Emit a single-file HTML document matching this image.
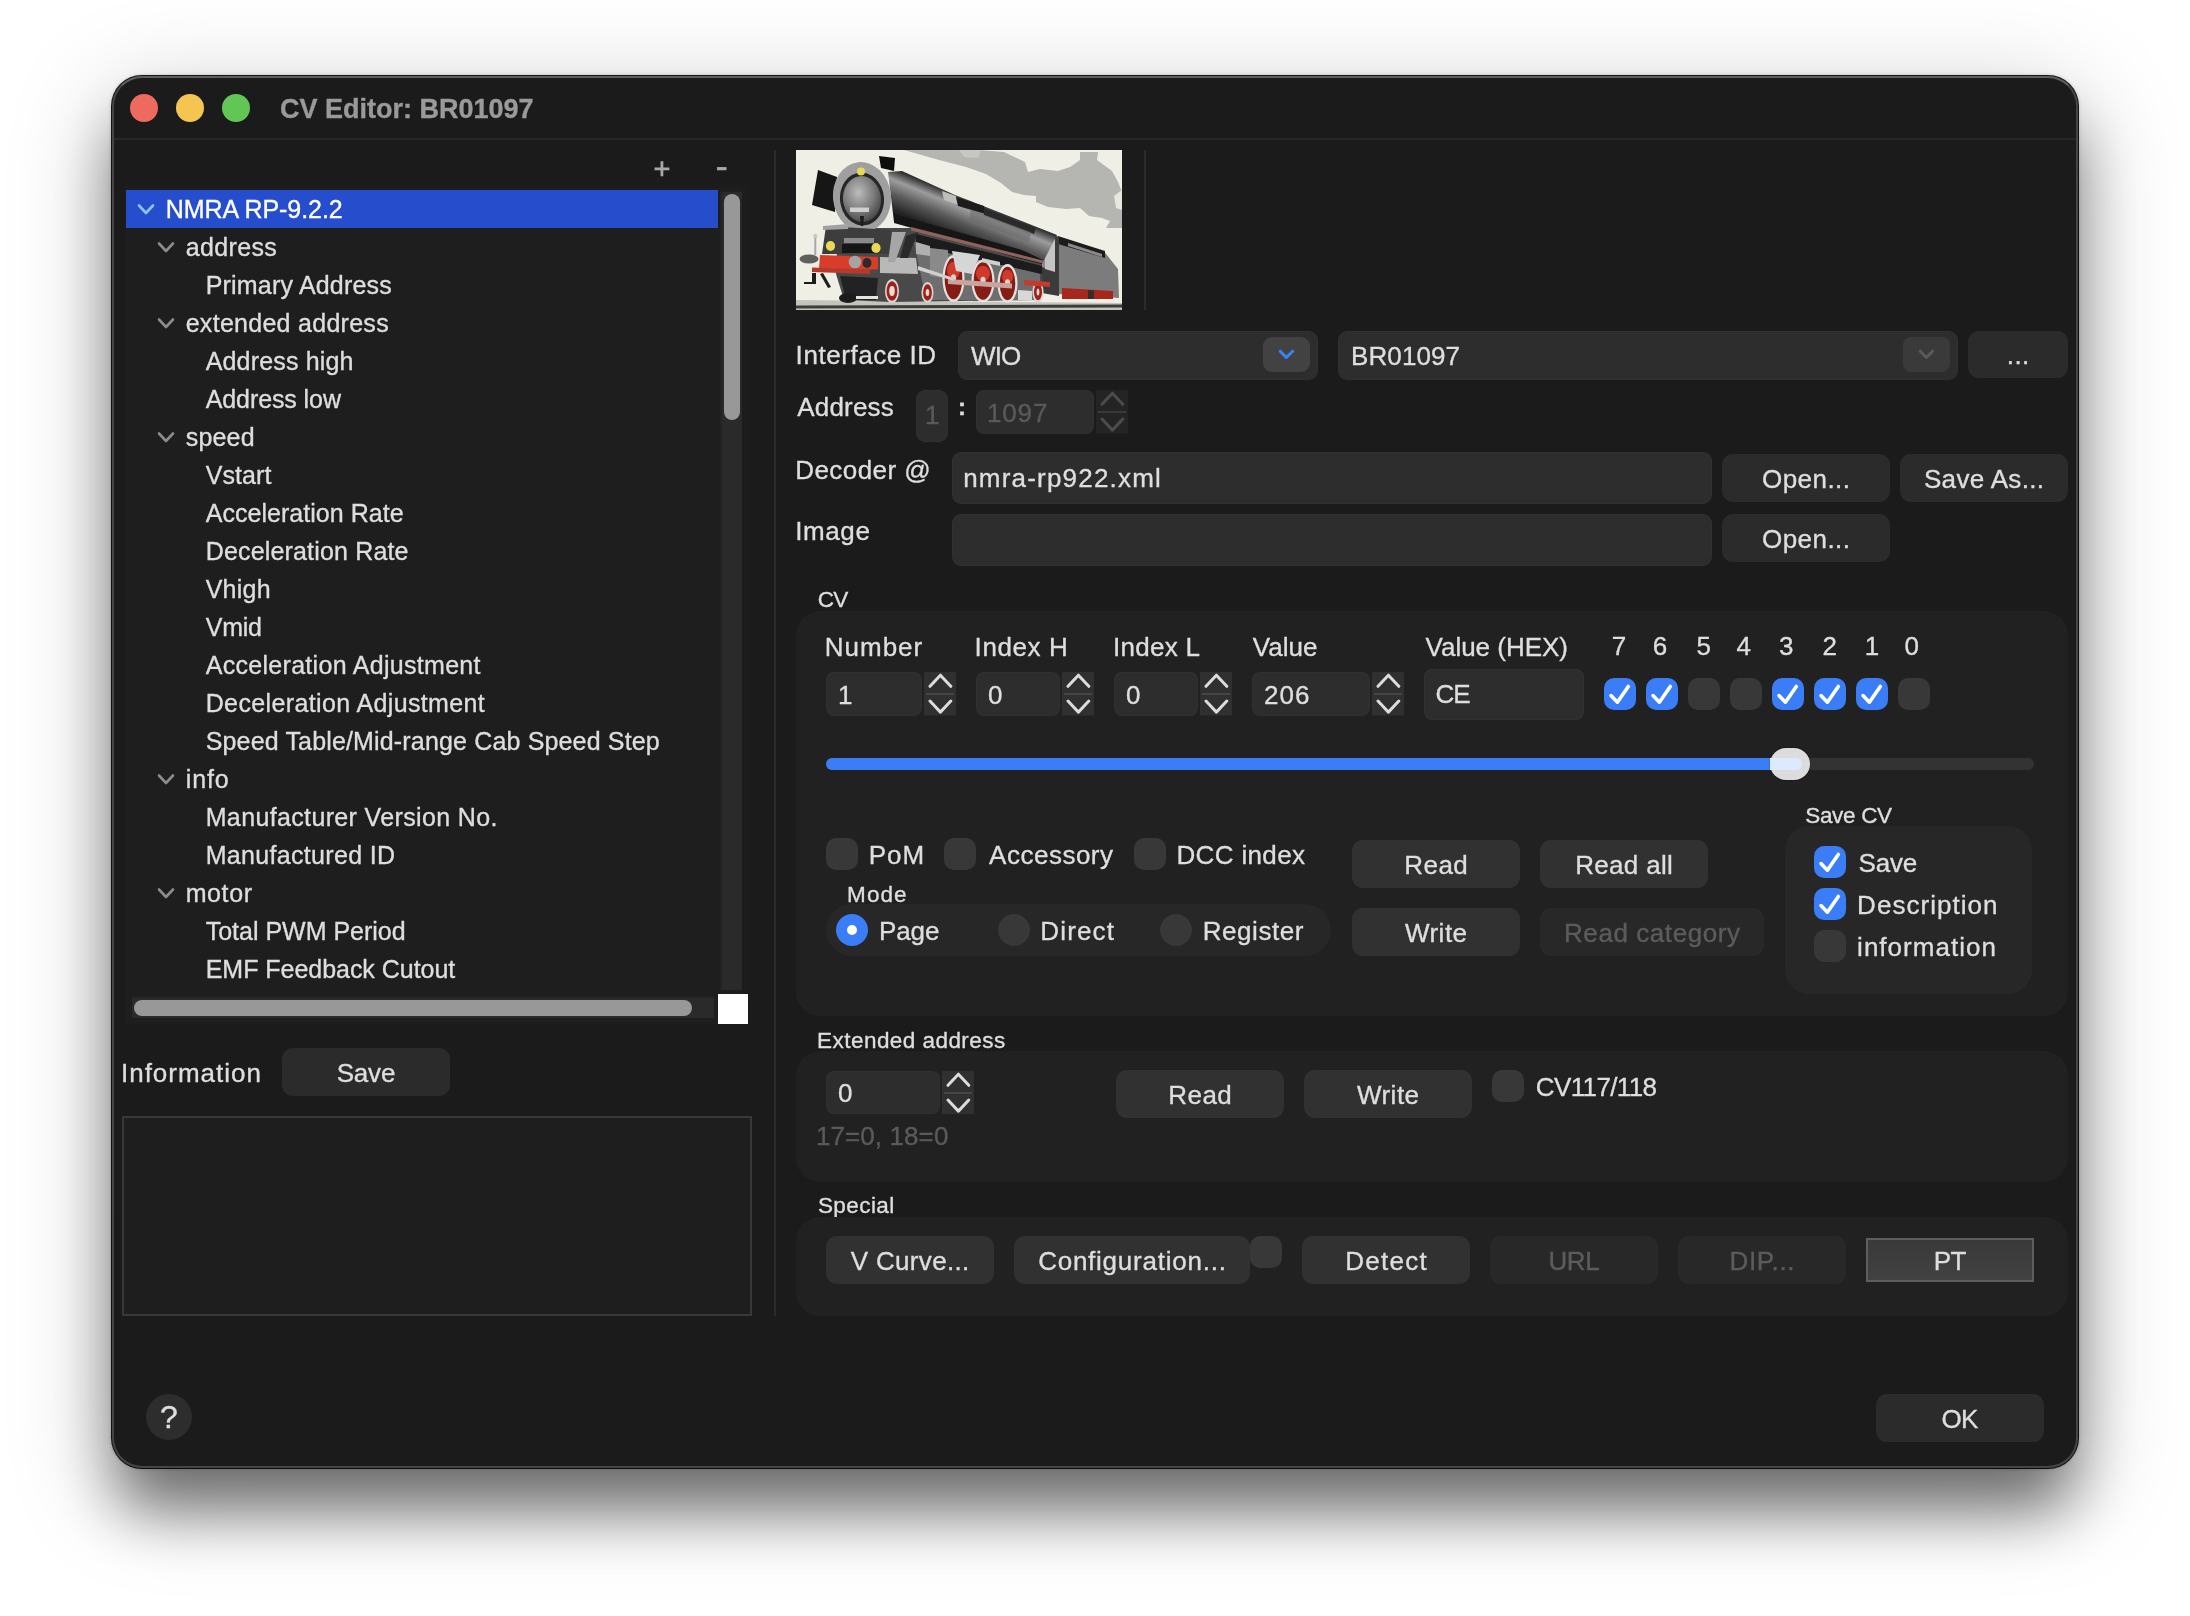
<!DOCTYPE html>
<html lang="en"><head><meta charset="utf-8"><title>CV Editor: BR01097</title>
<style>
html,body{margin:0;padding:0;background:#fff;}
body{width:2190px;height:1616px;position:relative;overflow:hidden;font-family:"Liberation Sans",sans-serif;color:#dedede;font-size:26px;}
.a{position:absolute;box-sizing:border-box;}
.t{position:absolute;white-space:nowrap;line-height:1;}
.t,.btn span{-webkit-text-stroke:0.35px currentColor;}
.win{left:112px;top:76px;width:1966px;height:1392px;border-radius:30px;background:#1b1b1b;
 box-shadow:0 0 0 1px rgba(0,0,0,.9), 0 0 4px rgba(0,0,0,.3), 0 47px 62px -6px rgba(0,0,0,.50), 0 24px 100px 6px rgba(0,0,0,.21);}
.win:after{content:"";position:absolute;left:0;top:0;right:0;bottom:0;border-radius:30px;border:2px solid rgba(255,255,255,.19);border-top-color:rgba(255,255,255,.30);pointer-events:none;}
.btn{position:absolute;box-sizing:border-box;background:rgba(255,255,255,.075);border-radius:11px;text-align:center;white-space:nowrap;}
.btn span{position:absolute;left:0;right:0;display:block;line-height:1;text-align:center;}
.dis{color:#5c5c5c;background:rgba(255,255,255,.035);}
.fld{position:absolute;box-sizing:border-box;background:#2d2d2d;border-radius:8px;box-shadow:inset 0 0 0 1px rgba(255,255,255,.025);}
.grp{position:absolute;box-sizing:border-box;background:#212121;border-radius:24px;}
.cb{position:absolute;box-sizing:border-box;width:32px;height:32px;border-radius:10px;background:#383838;}
.cb.on{background:#3b7df6;}
.rd{position:absolute;width:32px;height:32px;border-radius:16px;background:#383838;}
.rd.on{background:#3b7df6;}
.rd.on:after{content:"";position:absolute;left:11px;top:11px;width:10px;height:10px;border-radius:5px;background:#fff;}
.row{position:absolute;left:126px;width:592px;height:38px;}
.tr{font-size:25px;}
.sm{font-size:22.5px;}
.st{position:absolute;width:32px;background:#303030;}
</style></head><body>
<div class="a" style="left:0;top:0;width:2190px;height:1616px;will-change:transform;">

<div class="a win"></div>
<div class="a" style="left:130px;top:94px;width:28px;height:28px;border-radius:14px;background:#ee6a5f;"></div>
<div class="a" style="left:176px;top:94px;width:28px;height:28px;border-radius:14px;background:#f5c451;"></div>
<div class="a" style="left:222px;top:94px;width:28px;height:28px;border-radius:14px;background:#62c656;"></div>
<div class="t" id="title" style="left:280px;top:95.5px;font-size:27px;font-weight:bold;color:#9a9a9a;">CV Editor: BR01097</div>
<div class="a" style="left:114px;top:138px;width:1962px;height:2px;background:#272727;"></div>
<div class="t" id="plus" style="left:653.6px;top:154.5px;font-size:29px;-webkit-text-stroke:0.6px #a8a8a8;color:#a8a8a8;">+</div>
<div class="t" id="minus" style="left:715.5px;top:146.7px;font-size:37px;color:#a8a8a8;">-</div>
<div class="a" style="left:124px;top:184px;width:626px;height:842px;background:#1c1c1c;"></div>
<div class="a" style="left:126px;top:188px;width:616px;height:836px;background:#1e1e1e;"></div>
<div class="row" style="top:190px;background:#254dcc;">
<svg class="a" style="left:10px;top:9px" width="20" height="20"><path d="M3 6.5l7 7.5 7-7.5" stroke="#8fc3ff" stroke-width="2.6" fill="none" stroke-linecap="round" stroke-linejoin="round"/></svg>
<div class="t tr" style="left:39.69999999999999px;top:7.1px;letter-spacing:-0.07px;color:#fff;">NMRA RP-9.2.2</div></div>
<div class="row" style="top:228px;">
<svg class="a" style="left:30px;top:9px" width="20" height="20"><path d="M3 6.5l7 7.5 7-7.5" stroke="#8c8c8c" stroke-width="2.6" fill="none" stroke-linecap="round" stroke-linejoin="round"/></svg>
<div class="t tr" style="left:59.69999999999999px;top:7.1px;letter-spacing:0.36px;">address</div></div>
<div class="row" style="top:266px;">
<div class="t tr" style="left:79.69999999999999px;top:7.1px;letter-spacing:0.19px;">Primary Address</div></div>
<div class="row" style="top:304px;">
<svg class="a" style="left:30px;top:9px" width="20" height="20"><path d="M3 6.5l7 7.5 7-7.5" stroke="#8c8c8c" stroke-width="2.6" fill="none" stroke-linecap="round" stroke-linejoin="round"/></svg>
<div class="t tr" style="left:59.69999999999999px;top:7.1px;letter-spacing:0.28px;">extended address</div></div>
<div class="row" style="top:342px;">
<div class="t tr" style="left:79.69999999999999px;top:7.1px;letter-spacing:0.17px;">Address high</div></div>
<div class="row" style="top:380px;">
<div class="t tr" style="left:79.69999999999999px;top:7.1px;letter-spacing:-0.09px;">Address low</div></div>
<div class="row" style="top:418px;">
<svg class="a" style="left:30px;top:9px" width="20" height="20"><path d="M3 6.5l7 7.5 7-7.5" stroke="#8c8c8c" stroke-width="2.6" fill="none" stroke-linecap="round" stroke-linejoin="round"/></svg>
<div class="t tr" style="left:59.69999999999999px;top:7.1px;letter-spacing:0.20px;">speed</div></div>
<div class="row" style="top:456px;">
<div class="t tr" style="left:79.69999999999999px;top:7.1px;letter-spacing:0.09px;">Vstart</div></div>
<div class="row" style="top:494px;">
<div class="t tr" style="left:79.69999999999999px;top:7.1px;letter-spacing:0.04px;">Acceleration Rate</div></div>
<div class="row" style="top:532px;">
<div class="t tr" style="left:79.69999999999999px;top:7.1px;letter-spacing:0.17px;">Deceleration Rate</div></div>
<div class="row" style="top:570px;">
<div class="t tr" style="left:79.69999999999999px;top:7.1px;letter-spacing:0.24px;">Vhigh</div></div>
<div class="row" style="top:608px;">
<div class="t tr" style="left:79.69999999999999px;top:7.1px;letter-spacing:-0.21px;">Vmid</div></div>
<div class="row" style="top:646px;">
<div class="t tr" style="left:79.69999999999999px;top:7.1px;letter-spacing:0.30px;">Acceleration Adjustment</div></div>
<div class="row" style="top:684px;">
<div class="t tr" style="left:79.69999999999999px;top:7.1px;letter-spacing:0.37px;">Deceleration Adjustment</div></div>
<div class="row" style="top:722px;">
<div class="t tr" style="left:79.69999999999999px;top:7.1px;letter-spacing:0.16px;">Speed Table/Mid-range Cab Speed Step</div></div>
<div class="row" style="top:760px;">
<svg class="a" style="left:30px;top:9px" width="20" height="20"><path d="M3 6.5l7 7.5 7-7.5" stroke="#8c8c8c" stroke-width="2.6" fill="none" stroke-linecap="round" stroke-linejoin="round"/></svg>
<div class="t tr" style="left:59.69999999999999px;top:7.1px;letter-spacing:0.92px;">info</div></div>
<div class="row" style="top:798px;">
<div class="t tr" style="left:79.69999999999999px;top:7.1px;letter-spacing:0.36px;">Manufacturer Version No.</div></div>
<div class="row" style="top:836px;">
<div class="t tr" style="left:79.69999999999999px;top:7.1px;letter-spacing:0.32px;">Manufactured ID</div></div>
<div class="row" style="top:874px;">
<svg class="a" style="left:30px;top:9px" width="20" height="20"><path d="M3 6.5l7 7.5 7-7.5" stroke="#8c8c8c" stroke-width="2.6" fill="none" stroke-linecap="round" stroke-linejoin="round"/></svg>
<div class="t tr" style="left:59.69999999999999px;top:7.1px;letter-spacing:0.60px;">motor</div></div>
<div class="row" style="top:912px;">
<div class="t tr" style="left:79.69999999999999px;top:7.1px;letter-spacing:-0.01px;">Total PWM Period</div></div>
<div class="row" style="top:950px;">
<div class="t tr" style="left:79.69999999999999px;top:7.1px;letter-spacing:-0.03px;">EMF Feedback Cutout</div></div>
<div class="a" style="left:720px;top:192px;width:22px;height:798px;background:#2a2a2a;border-left:2px solid #232323;"></div>
<div class="a" style="left:724px;top:194px;width:16px;height:226px;border-radius:8px;background:#989898;"></div>
<div class="a" style="left:132px;top:996px;width:582px;height:22px;background:#2a2a2a;border-top:2px solid #232323;"></div>
<div class="a" style="left:134px;top:1000px;width:558px;height:16px;border-radius:8px;background:#989898;"></div>
<div class="a" style="left:718px;top:994px;width:30px;height:30px;background:#fff;"></div>
<div class="t " style="left:121.0px;top:1060.3px;font-size:26px;letter-spacing:0.98px;">Information</div>
<div class="btn " style="left:282px;top:1048px;width:168px;height:47.5px;"><span style="top:11.6px;letter-spacing:-0.17px;text-indent:-0.17px;">Save</span></div>
<div class="a" style="left:122px;top:1116px;width:630px;height:200px;background:#1e1e1e;border:2px solid #383838;"></div>
<div class="a" style="left:146px;top:1394px;width:46px;height:46px;border-radius:23px;background:#2d2d2d;text-align:center;"><span class="t" style="left:0;right:0;text-align:center;top:7.4px;font-size:32px;">?</span></div>
<div class="btn " style="left:1876px;top:1394px;width:168px;height:47.5px;"><span style="top:11.6px;letter-spacing:-0.70px;text-indent:-0.70px;">OK</span></div>
<div class="a" style="left:774px;top:150px;width:2px;height:1166px;background:#2b2b2b;"></div>
<div class="a" style="left:1144px;top:150px;width:2px;height:160px;background:#2b2b2b;"></div>
<svg class="a" style="left:796px;top:150px" width="326" height="160" viewBox="0 0 326 160"><defs><filter id="bl" x="-5%" y="-5%" width="110%" height="110%"><feGaussianBlur stdDeviation="0.75"/></filter><linearGradient id="boil" gradientUnits="userSpaceOnUse" x1="150" y1="40" x2="132" y2="84"><stop offset="0" stop-color="#2c2c2c"/><stop offset="0.22" stop-color="#9c9c9c"/><stop offset="0.5" stop-color="#5a5a5a"/><stop offset="0.8" stop-color="#262626"/><stop offset="1" stop-color="#151515"/></linearGradient><radialGradient id="door" cx="0.42" cy="0.35" r="0.75"><stop offset="0" stop-color="#bcbcbc"/><stop offset="0.55" stop-color="#7a7a7a"/><stop offset="1" stop-color="#3a3a3a"/></radialGradient><clipPath id="cl"><rect width="326" height="160"/></clipPath></defs><rect width="326" height="160" fill="#f0efe6"/><g clip-path="url(#cl)" filter="url(#bl)"><polygon points="108,0 183,0 208,2 229,12 232,22 244,19 262,21 274,17 284,10 284,2 302,2 301,10 316,21 322,32 326,42 326,78 310,78 314,71 306,68 293,66 284,58 270,59 252,57 240,52 240,46 228,45 216,42 205,33 190,24 170,17 143,10" fill="#b5b5b2" /><polygon points="163,0 185,0 182,8 168,7" fill="#c6c6c2" /><polygon points="318,46 326,40 326,60 320,58" fill="#e8e7df" /><polygon points="0,150 326,153 326,160 0,160" fill="#c4c4be" /><polygon points="0,155.5 326,154.5 326,157.5 0,158.5" fill="#3c3c3c" /><polygon points="262,87 308.5,102 322,119 323,148 261,144" fill="#7c7c7c" /><polygon points="262,86 309,101 309,108 262,94" fill="#1f1f1f" /><polygon points="272,93 306,104 306,107 272,96" fill="#8a8a8a" /><polygon points="266,138 317,141 317,149 266,149" fill="#a9271d" /><polygon points="292,140 298,140.4 298,149 292,149" fill="#3a2a2a" /><polygon points="240,78 263,87 263,146 240,142" fill="#3a3a3a" /><polygon points="249,84 259,88 259,122 249,119" fill="#c4c4c4" /><polygon points="243,100 249,102 249,118 243,116" fill="#8e8e8e" /><polygon points="42,78 118,78 246,110 246,150 95,152 48,150 40,124" fill="#4a4a4a" /><polygon points="118,92 200,112 244,124 244,150 130,150" fill="#6e6e6e" /><polygon points="120,84 246,116 246,124 120,96" fill="#1a1a1a" /><polygon points="92,22 106,21 159,45 223,70 261,85 247,112 223,107 142,85 98,72" fill="url(#boil)" /><polygon points="98,64 226,100 247,110 246,114 222,108 98,73" fill="#161616" /><polygon points="146,41 160,46 162,55 148,50" fill="#bdbdbd" /><polygon points="160,47 188,56 190,64 162,56" fill="#1e1e1e" /><polygon points="188,58 240,78 238,84 188,65" fill="#2a2a2a" /><polygon points="175,60 235,82 233,92 173,70" fill="#6a6a6a" opacity="0.55"/><polygon points="115,77 247,110.5 247,113.5 115,80.5" fill="#8f625d" /><polygon points="83,6 99,8 98,21 85,18" fill="#101010" /><polygon points="22,20 41,27 39,62 16,55" fill="#141414" /><ellipse cx="66" cy="47" rx="29" ry="35" fill="#9f9f9f" transform="rotate(-6 66 47)"/><ellipse cx="66" cy="49" rx="22" ry="26.5" fill="#262626" transform="rotate(-6 66 49)"/><ellipse cx="66" cy="49" rx="19" ry="23" fill="url(#door)" transform="rotate(-6 66 49)"/><polygon points="54,57.5 73,57.5 73,62 54,62" fill="#cfcfcf" /><polygon points="64,66 68,66 67,76 65,76" fill="#1a1a1a" /><polygon points="30,76 95,80 98,104 26,104" fill="#3c3c3c" /><polygon points="27,76 52,74 52,79 27,80" fill="#a2a2a2" /><polygon points="46,94 80,94 80,103 46,103" fill="#151515" /><polygon points="48,88 78,88 78,93 48,93" fill="#8a8a8a" /><ellipse cx="65" cy="21.5" rx="4" ry="4" fill="#e9da55" /><ellipse cx="34.5" cy="96" rx="4.6" ry="5" fill="#e9da55" /><ellipse cx="80" cy="98" rx="4.6" ry="5" fill="#e9da55" /><polygon points="24,105 82,107 82,119.5 23,118.5" fill="#d93c2b" /><polygon points="16,117.5 74,119.5 74,124 16,122" fill="#b8382c" /><ellipse cx="59" cy="112" rx="6.3" ry="6.3" fill="#a4a4a4" /><ellipse cx="71" cy="113" rx="4.5" ry="5" fill="#2a2a2a" /><ellipse cx="13" cy="109" rx="9.5" ry="4.6" fill="#5e5e5e" /><polygon points="18.3,86 20.3,86 20.3,105 18.3,105" fill="#a8a8a8" /><ellipse cx="19.3" cy="86" rx="2.2" ry="2.2" fill="#c8c8c8" /><polygon points="16,123 20,123 20,134 8,134 8,132 16,132" fill="#1c1c1c" /><polygon points="24,124 27,123 35,137 32,138" fill="#1c1c1c" /><polygon points="84,107 120,108 122,124 84,123" fill="#b9b9b9" /><polygon points="96,82 110,82 99,112 92,112" fill="#a6a6a6" /><polygon points="110,86 122,82 112,108 104,108" fill="#2a2a2a" /><polygon points="134,98 152,100 152,128 134,126" fill="#8a8a8a" /><polygon points="120,92 134,96 134,106 120,104" fill="#b0b0b0" /><polygon points="44,126 82,128 80,150 50,150" fill="#202020" /><ellipse cx="52" cy="148" rx="9" ry="5" fill="#1a1a1a" /><polygon points="60,146 82,146 82,149 60,149" fill="#e4e4e4" /><ellipse cx="157.5" cy="128.5" rx="11" ry="23.5" fill="#e2e2e2" /><ellipse cx="157.5" cy="128.5" rx="8.8" ry="20.7" fill="#861a12" /><ellipse cx="157.5" cy="120.275" rx="6.5" ry="8.46" fill="#cf3a2c" /><ellipse cx="157.5" cy="128.5" rx="2.6" ry="4.2" fill="#e8d0cc" /><ellipse cx="187" cy="131" rx="11.5" ry="21.5" fill="#e2e2e2" /><ellipse cx="187" cy="131" rx="9.3" ry="18.7" fill="#861a12" /><ellipse cx="187" cy="123.475" rx="7" ry="7.74" fill="#cf3a2c" /><ellipse cx="187" cy="131" rx="2.6" ry="4.2" fill="#e8d0cc" /><ellipse cx="211.5" cy="133.5" rx="10" ry="19.5" fill="#e2e2e2" /><ellipse cx="211.5" cy="133.5" rx="7.8" ry="16.7" fill="#861a12" /><ellipse cx="211.5" cy="126.675" rx="5.5" ry="7.02" fill="#cf3a2c" /><ellipse cx="211.5" cy="133.5" rx="2.6" ry="4.2" fill="#e8d0cc" /><polygon points="152,129 216,133.5 216,138.5 152,134" fill="#caa39d" /><polygon points="156,101 184,105 176,124 160,121" fill="#d6d6d6" /><polygon points="122,116 158,128 158,131 122,120" fill="#d0d0d0" /><polygon points="186,108 204,112 204,116 186,112" fill="#d0d0d0" /><ellipse cx="96" cy="141" rx="7" ry="12" fill="#d6d6d6" /><ellipse cx="96" cy="141" rx="5.4" ry="9.8" fill="#9c2018" /><ellipse cx="96" cy="141" rx="2.8" ry="5" fill="#f0d8d4" /><ellipse cx="131.5" cy="142.5" rx="6" ry="10.5" fill="#d6d6d6" /><ellipse cx="131.5" cy="142.5" rx="4.4" ry="8.3" fill="#9c2018" /><ellipse cx="131.5" cy="142.5" rx="1.8" ry="3.5" fill="#f0d8d4" /><ellipse cx="242" cy="142" rx="5.6" ry="10.5" fill="#d6d6d6" /><ellipse cx="242" cy="142" rx="4" ry="8.3" fill="#9c2018" /><ellipse cx="242" cy="142" rx="1.4" ry="3.5" fill="#f0d8d4" /><polygon points="228,130 254,132 254,137 228,135" fill="#c43a2d" /><polygon points="222,140 236,141 236,150 222,150" fill="#d8d8d8" /></g></svg>
<div class="t " style="left:795.6px;top:342.3px;font-size:26px;letter-spacing:0.56px;">Interface ID</div>
<div class="fld" style="left:958px;top:330.5px;width:360px;height:49px;border-radius:9px;"></div>
<div class="t " style="left:971.0px;top:342.8px;font-size:26px;letter-spacing:-0.90px;">WIO</div>
<div class="a" style="left:1263px;top:337px;width:47px;height:35px;border-radius:9px;background:#424242;"></div>
<svg class="a" style="left:1276px;top:345px" width="22" height="20"><path d="M4.2 6.2l6.2 6.3 6.2-6.3" stroke="#3a82f7" stroke-width="3" fill="none" stroke-linecap="round" stroke-linejoin="round"/></svg>
<div class="fld" style="left:1338px;top:330.5px;width:620px;height:49px;border-radius:9px;"></div>
<div class="t " style="left:1351px;top:342.8px;font-size:26px;letter-spacing:0.10px;">BR01097</div>
<div class="a" style="left:1903px;top:337px;width:47px;height:35px;border-radius:8px;background:#3a3a3a;"></div>
<svg class="a" style="left:1916px;top:345px" width="22" height="20"><path d="M4.2 6.2l6.2 6.3 6.2-6.3" stroke="#5a5a5a" stroke-width="3" fill="none" stroke-linecap="round" stroke-linejoin="round"/></svg>
<div class="btn " style="left:1968px;top:330.5px;width:100px;height:47px;"><span style="top:11.3px;letter-spacing:0.50px;text-indent:0.50px;">...</span></div>
<div class="t " style="left:797.2px;top:394.3px;font-size:26px;letter-spacing:0.20px;">Address</div>
<div class="fld" style="left:916px;top:390px;width:32px;height:52px;border-radius:9px;"></div>
<div class="t " style="left:925px;top:402.3px;font-size:26px;letter-spacing:1.00px;color:#5a5a5a;">1</div>
<div class="t" id="colon" style="left:958px;top:395.2px;font-size:24px;font-weight:bold;">:</div>
<div class="fld" style="left:976px;top:390px;width:118px;height:43.5px;"></div>
<div class="t " style="left:987.0px;top:399.8px;font-size:26px;letter-spacing:0.85px;color:#5a5a5a;">1097</div>
<svg class="a" style="left:1096px;top:390px" width="32" height="43.5" viewBox="0 0 32 43.5"><rect width="32" height="43.5" fill="#242424"/><path d="M6 14.3L16.4 3.2 26.8 14.3M6 29L16.4 40.1 26.8 29" stroke="#4c4c4c" stroke-width="3" fill="none" stroke-linecap="round" stroke-linejoin="round"/><rect x="2" y="21" width="28" height="2" fill="#3a3a3a"/></svg>
<div class="t " style="left:795.2px;top:456.8px;font-size:26px;letter-spacing:0.44px;">Decoder @</div>
<div class="fld" style="left:952px;top:452px;width:760px;height:51.5px;border-radius:9px;"></div>
<div class="t " style="left:963.2px;top:464.8px;font-size:26px;letter-spacing:1.20px;">nmra-rp922.xml</div>
<div class="btn " style="left:1722px;top:454px;width:168px;height:47.8px;"><span style="top:11.7px;letter-spacing:0.46px;text-indent:0.46px;">Open...</span></div>
<div class="btn " style="left:1900px;top:454px;width:168px;height:47.8px;"><span style="top:11.7px;letter-spacing:0.34px;text-indent:0.34px;">Save As...</span></div>
<div class="t " style="left:795.2px;top:518.3px;font-size:26px;letter-spacing:0.60px;">Image</div>
<div class="fld" style="left:952px;top:514px;width:760px;height:51.5px;border-radius:9px;"></div>
<div class="btn " style="left:1722px;top:514px;width:168px;height:47.6px;"><span style="top:11.6px;letter-spacing:0.46px;text-indent:0.46px;">Open...</span></div>
<div class="t " style="left:817.8px;top:589.0px;font-size:22.5px;letter-spacing:-0.90px;">CV</div>
<div class="grp" style="left:796px;top:610.5px;width:1272px;height:405px;"></div>
<div class="t " style="left:824.8px;top:634.3px;font-size:26px;letter-spacing:0.98px;">Number</div>
<div class="t " style="left:974.6px;top:634.3px;font-size:26px;letter-spacing:0.58px;">Index H</div>
<div class="t " style="left:1112.9px;top:634.3px;font-size:26px;letter-spacing:0.29px;">Index L</div>
<div class="t " style="left:1252.8px;top:634.3px;font-size:26px;letter-spacing:0.05px;">Value</div>
<div class="t " style="left:1425.6px;top:634.3px;font-size:26px;letter-spacing:-0.02px;">Value (HEX)</div>
<div class="fld" style="left:826px;top:672px;width:96px;height:43.5px;"></div>
<div class="t " style="left:838px;top:681.8px;font-size:26px;letter-spacing:1.00px;">1</div>
<svg class="a" style="left:924px;top:672px" width="32" height="43.5" viewBox="0 0 32 43.5"><rect width="32" height="43.5" fill="#303030"/><path d="M6 14.3L16.4 3.2 26.8 14.3M6 29L16.4 40.1 26.8 29" stroke="#dcdcdc" stroke-width="3" fill="none" stroke-linecap="round" stroke-linejoin="round"/><rect x="2" y="21" width="28" height="2" fill="#464646"/></svg>
<div class="fld" style="left:976px;top:672px;width:84px;height:43.5px;"></div>
<div class="t " style="left:988px;top:681.8px;font-size:26px;letter-spacing:1.00px;">0</div>
<svg class="a" style="left:1062px;top:672px" width="32" height="43.5" viewBox="0 0 32 43.5"><rect width="32" height="43.5" fill="#303030"/><path d="M6 14.3L16.4 3.2 26.8 14.3M6 29L16.4 40.1 26.8 29" stroke="#dcdcdc" stroke-width="3" fill="none" stroke-linecap="round" stroke-linejoin="round"/><rect x="2" y="21" width="28" height="2" fill="#464646"/></svg>
<div class="fld" style="left:1114px;top:672px;width:84px;height:43.5px;"></div>
<div class="t " style="left:1126px;top:681.8px;font-size:26px;letter-spacing:1.00px;">0</div>
<svg class="a" style="left:1200px;top:672px" width="32" height="43.5" viewBox="0 0 32 43.5"><rect width="32" height="43.5" fill="#303030"/><path d="M6 14.3L16.4 3.2 26.8 14.3M6 29L16.4 40.1 26.8 29" stroke="#dcdcdc" stroke-width="3" fill="none" stroke-linecap="round" stroke-linejoin="round"/><rect x="2" y="21" width="28" height="2" fill="#464646"/></svg>
<div class="fld" style="left:1252px;top:672px;width:118px;height:43.5px;"></div>
<div class="t " style="left:1264px;top:681.8px;font-size:26px;letter-spacing:1.00px;">206</div>
<svg class="a" style="left:1372px;top:672px" width="32" height="43.5" viewBox="0 0 32 43.5"><rect width="32" height="43.5" fill="#303030"/><path d="M6 14.3L16.4 3.2 26.8 14.3M6 29L16.4 40.1 26.8 29" stroke="#dcdcdc" stroke-width="3" fill="none" stroke-linecap="round" stroke-linejoin="round"/><rect x="2" y="21" width="28" height="2" fill="#464646"/></svg>
<div class="fld" style="left:1424px;top:668.5px;width:160px;height:51.5px;"></div>
<div class="t " style="left:1435.4px;top:680.8px;font-size:26px;letter-spacing:-0.90px;">CE</div>
<div class="cb on" style="left:1604.0px;top:678px;"><svg width="32" height="32" style="position:absolute;left:0;top:0"><path d="M7 17.6l6.4 6.6L24.3 8.4" stroke="#fff" stroke-width="3.6" fill="none" stroke-linecap="round" stroke-linejoin="round"/></svg></div>
<div class="t" style="left:1598.9px;width:40px;text-align:center;top:633.0px;">7</div>
<div class="cb on" style="left:1646.0px;top:678px;"><svg width="32" height="32" style="position:absolute;left:0;top:0"><path d="M7 17.6l6.4 6.6L24.3 8.4" stroke="#fff" stroke-width="3.6" fill="none" stroke-linecap="round" stroke-linejoin="round"/></svg></div>
<div class="t" style="left:1640.0px;width:40px;text-align:center;top:633.0px;">6</div>
<div class="cb" style="left:1688.0px;top:678px;"></div>
<div class="t" style="left:1683.8px;width:40px;text-align:center;top:633.0px;">5</div>
<div class="cb" style="left:1730.0px;top:678px;"></div>
<div class="t" style="left:1723.7px;width:40px;text-align:center;top:633.0px;">4</div>
<div class="cb on" style="left:1772.0px;top:678px;"><svg width="32" height="32" style="position:absolute;left:0;top:0"><path d="M7 17.6l6.4 6.6L24.3 8.4" stroke="#fff" stroke-width="3.6" fill="none" stroke-linecap="round" stroke-linejoin="round"/></svg></div>
<div class="t" style="left:1766.2px;width:40px;text-align:center;top:633.0px;">3</div>
<div class="cb on" style="left:1814.0px;top:678px;"><svg width="32" height="32" style="position:absolute;left:0;top:0"><path d="M7 17.6l6.4 6.6L24.3 8.4" stroke="#fff" stroke-width="3.6" fill="none" stroke-linecap="round" stroke-linejoin="round"/></svg></div>
<div class="t" style="left:1809.7px;width:40px;text-align:center;top:633.0px;">2</div>
<div class="cb on" style="left:1856.0px;top:678px;"><svg width="32" height="32" style="position:absolute;left:0;top:0"><path d="M7 17.6l6.4 6.6L24.3 8.4" stroke="#fff" stroke-width="3.6" fill="none" stroke-linecap="round" stroke-linejoin="round"/></svg></div>
<div class="t" style="left:1852.0px;width:40px;text-align:center;top:633.0px;">1</div>
<div class="cb" style="left:1898.0px;top:678px;"></div>
<div class="t" style="left:1891.7px;width:40px;text-align:center;top:633.0px;">0</div>
<div class="a" style="left:826px;top:758px;width:1208px;height:12px;border-radius:6px;background:#333;"></div>
<div class="a" style="left:826px;top:758px;width:970px;height:12px;border-radius:6px;background:#3b7df6;"></div>
<div class="a" style="left:1770px;top:748px;width:40px;height:32px;border-radius:16px;background:#dcdcdc;box-shadow:0 0 2px rgba(0,0,0,.4);"></div>
<div class="a" style="left:1770px;top:758px;width:32px;height:12px;border-radius:0 6px 6px 0;background:#dde9ff;"></div>
<div class="cb" style="left:826px;top:838px;"></div>
<div class="t " style="left:868.8px;top:842.3px;font-size:26px;letter-spacing:0.90px;">PoM</div>
<div class="cb" style="left:944px;top:838px;"></div>
<div class="t " style="left:989.1px;top:842.3px;font-size:26px;letter-spacing:0.50px;">Accessory</div>
<div class="cb" style="left:1134px;top:838px;"></div>
<div class="t " style="left:1176.5px;top:842.3px;font-size:26px;letter-spacing:0.34px;">DCC index</div>
<div class="btn " style="left:1352px;top:840px;width:168px;height:47.8px;"><span style="top:11.7px;letter-spacing:0.50px;text-indent:0.50px;">Read</span></div>
<div class="btn " style="left:1540px;top:840px;width:168px;height:47.8px;"><span style="top:11.7px;letter-spacing:0.30px;text-indent:0.30px;">Read all</span></div>
<div class="t " style="left:847.1px;top:883.5px;font-size:22.5px;letter-spacing:1.04px;">Mode</div>
<div class="a" style="left:826px;top:904px;width:505px;height:52px;border-radius:26px;background:#272727;"></div>
<div class="rd on" style="left:836px;top:914px;"></div>
<div class="t " style="left:878.9px;top:917.8px;font-size:26px;letter-spacing:-0.04px;">Page</div>
<div class="rd" style="left:998px;top:914px;"></div>
<div class="t " style="left:1040.3px;top:917.8px;font-size:26px;letter-spacing:1.14px;">Direct</div>
<div class="rd" style="left:1160px;top:914px;"></div>
<div class="t " style="left:1202.8px;top:917.8px;font-size:26px;letter-spacing:0.54px;">Register</div>
<div class="btn " style="left:1352px;top:908px;width:168px;height:47.6px;"><span style="top:11.6px;letter-spacing:0.50px;text-indent:0.50px;">Write</span></div>
<div class="btn dis" style="left:1540px;top:908px;width:224px;height:47.6px;"><span style="top:11.6px;letter-spacing:0.57px;text-indent:0.57px;">Read category</span></div>
<div class="t " style="left:1805.2px;top:805.0px;font-size:22.5px;letter-spacing:-0.31px;">Save CV</div>
<div class="a" style="left:1785px;top:826px;width:247px;height:167.5px;border-radius:24px;background:#272727;"></div>
<div class="cb on" style="left:1814px;top:846px;"><svg width="32" height="32" style="position:absolute;left:0;top:0"><path d="M7 17.6l6.4 6.6L24.3 8.4" stroke="#fff" stroke-width="3.6" fill="none" stroke-linecap="round" stroke-linejoin="round"/></svg></div>
<div class="t " style="left:1858.5px;top:850.3px;font-size:26px;letter-spacing:-0.17px;">Save</div>
<div class="cb on" style="left:1814px;top:887.7px;"><svg width="32" height="32" style="position:absolute;left:0;top:0"><path d="M7 17.6l6.4 6.6L24.3 8.4" stroke="#fff" stroke-width="3.6" fill="none" stroke-linecap="round" stroke-linejoin="round"/></svg></div>
<div class="t " style="left:1857.1px;top:891.9px;font-size:26px;letter-spacing:1.04px;">Description</div>
<div class="cb" style="left:1814px;top:929.8px;"></div>
<div class="t " style="left:1857.1px;top:933.9px;font-size:26px;letter-spacing:1.02px;">information</div>
<div class="t " style="left:817.1px;top:1029.5px;font-size:22.5px;letter-spacing:0.45px;">Extended address</div>
<div class="grp" style="left:796px;top:1050.5px;width:1272px;height:131.5px;"></div>
<div class="fld" style="left:826px;top:1070.5px;width:114px;height:43.5px;"></div>
<div class="t " style="left:838px;top:1080.3px;font-size:26px;letter-spacing:1.00px;">0</div>
<svg class="a" style="left:942px;top:1070.5px" width="32" height="43.5" viewBox="0 0 32 43.5"><rect width="32" height="43.5" fill="#303030"/><path d="M6 14.3L16.4 3.2 26.8 14.3M6 29L16.4 40.1 26.8 29" stroke="#dcdcdc" stroke-width="3" fill="none" stroke-linecap="round" stroke-linejoin="round"/><rect x="2" y="21" width="28" height="2" fill="#464646"/></svg>
<div class="btn " style="left:1116px;top:1070px;width:168px;height:47.7px;"><span style="top:11.7px;letter-spacing:0.50px;text-indent:0.50px;">Read</span></div>
<div class="btn " style="left:1304px;top:1070px;width:168px;height:47.7px;"><span style="top:11.7px;letter-spacing:0.50px;text-indent:0.50px;">Write</span></div>
<div class="cb" style="left:1491.7px;top:1070px;"></div>
<div class="t " style="left:1535.8px;top:1074.3px;font-size:26px;letter-spacing:-0.62px;">CV117/118</div>
<div class="t " style="left:815.9px;top:1122.8px;font-size:26px;letter-spacing:0.10px;color:#5a5a5a;">17=0, 18=0</div>
<div class="t " style="left:817.9px;top:1195.0px;font-size:22.5px;letter-spacing:0.44px;">Special</div>
<div class="grp" style="left:796px;top:1216.5px;width:1272px;height:99.5px;"></div>
<div class="btn " style="left:826px;top:1236px;width:168px;height:47.6px;"><span style="top:11.6px;letter-spacing:0.32px;text-indent:0.32px;">V Curve...</span></div>
<div class="btn " style="left:1014px;top:1236px;width:236px;height:47.6px;"><span style="top:11.6px;letter-spacing:0.76px;text-indent:0.76px;">Configuration...</span></div>
<div class="cb" style="left:1250px;top:1236px;"></div>
<div class="btn " style="left:1302px;top:1236px;width:168px;height:47.6px;"><span style="top:11.6px;letter-spacing:1.30px;text-indent:1.30px;">Detect</span></div>
<div class="btn dis" style="left:1490px;top:1236px;width:168px;height:47.6px;"><span style="top:11.6px;letter-spacing:-0.40px;text-indent:-0.40px;">URL</span></div>
<div class="btn dis" style="left:1678px;top:1236px;width:168px;height:47.6px;"><span style="top:11.6px;letter-spacing:0.70px;text-indent:0.70px;">DIP...</span></div>
<div class="btn" style="left:1866px;top:1238px;width:168px;height:44px;border-radius:0;background:linear-gradient(#393939,#424242);border:2px solid #5e5e5e;"><span style="top:7.8px;letter-spacing:-0.6px;text-indent:-0.6px">PT</span></div>
</div></body></html>
